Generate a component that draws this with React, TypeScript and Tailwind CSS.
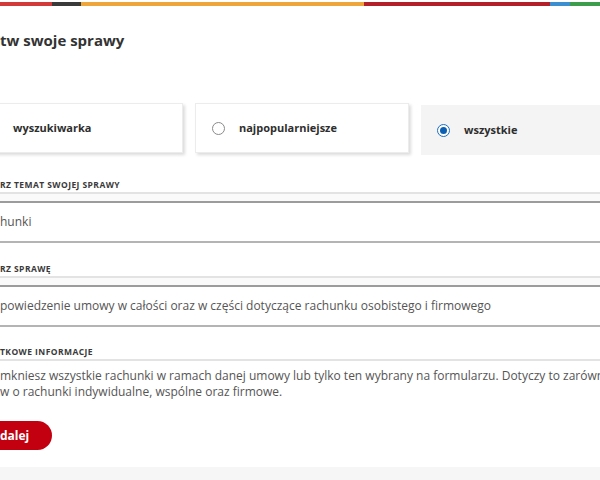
import React from "react";

const stripe = [
  { w: "w-[52px]", c: "bg-[#d23a3a]" },
  { w: "w-[29px]", c: "bg-[#3a3a3a]" },
  { w: "w-[283px]", c: "bg-[#eea53c]" },
  { w: "w-[186px]", c: "bg-[#b3202a]" },
  { w: "w-[20px]", c: "bg-[#3b8fd1]" },
  { w: "flex-1", c: "bg-[#3c9e4c]" },
];

function Radio({ checked }: { checked?: boolean }) {
  if (checked) {
    return (
      <span className="grid h-[13px] w-[13px] shrink-0 place-items-center rounded-full border-[1.5px] border-[#1a6fc0] bg-white">
        <span className="h-[7px] w-[7px] rounded-full bg-[#0b5fb3]" />
      </span>
    );
  }
  return <span className="h-[13px] w-[13px] shrink-0 rounded-full border-[1.5px] border-[#8a8a8a] bg-white" />;
}

function Option({ label, checked, active }: { label: string; checked?: boolean; active?: boolean }) {
  return (
    <div
      className={
        active
          ? "mt-[2px] flex h-[50px] items-center gap-[14px] bg-[#f4f4f4] pl-[16px]"
          : "flex h-[50px] items-center gap-[14px] border border-[#ececec] bg-white pl-[16px] shadow-[2px_2px_3px_rgba(0,0,0,0.14)]"
      }
    >
      <Radio checked={checked} />
      <span className="text-[11px] font-bold text-[#2e2e2e]">{label}</span>
    </div>
  );
}

function FieldLabel({ text, className }: { text: string; className?: string }) {
  return (
    <div className={`border-b-2 border-[#e3e3e3] pb-[2px] ${className ?? ""}`}>
      <p className="text-[8.5px] font-bold uppercase leading-[10px] tracking-[0.05em] text-[#3a3a3a]">{text}</p>
    </div>
  );
}

function FieldValue({ text }: { text: string }) {
  return (
    <>
      <div className="h-[7px] bg-[#fafafa]" />
      <div className="flex h-[42px] items-center border-t-2 border-b-2 border-t-[#9c9c9c] border-b-[#b4b4b4]">
        <span className="whitespace-nowrap text-[12px] text-[#555]">{text}</span>
      </div>
    </>
  );
}

export default function App() {
  return (
    <div className="relative h-[480px] w-[600px] overflow-hidden bg-white font-['Open_Sans',sans-serif]">
      <div className="mt-[2px] flex h-[4px]">
        {stripe.map((s, i) => (
          <div key={i} className={`${s.w} ${s.c}`} />
        ))}
      </div>

      <h1 className="mt-[24px] text-[15px] font-bold leading-[20px] text-[#333]">tw swoje sprawy</h1>

      <div className="ml-[-31px] mt-[53px] grid w-[666px] grid-cols-3 items-start gap-[12px]">
        <Option label="wyszukiwarka" />
        <Option label="najpopularniejsze" />
        <Option label="wszystkie" checked active />
      </div>

      <FieldLabel text="rz temat swojej sprawy" className="mt-[25px]" />
      <FieldValue text="hunki" />

      <FieldLabel text="rz sprawę" className="mt-[21px]" />
      <FieldValue text="powiedzenie umowy w całości oraz w części dotyczące rachunku osobistego i firmowego" />

      <FieldLabel text="tkowe informacje" className="mt-[20px]" />
      <div className="mt-[7px] text-[12px] leading-[16px] text-[#555]">
        <p className="whitespace-nowrap">
          mkniesz wszystkie rachunki w ramach danej umowy lub tylko ten wybrany na formularzu. Dotyczy to zarówno
        </p>
        <p className="whitespace-nowrap">w o rachunki indywidualne, wspólne oraz firmowe.</p>
      </div>

      <button className="mt-[21px] flex h-[29px] w-[52px] items-center rounded-r-full bg-[#c3000f] text-[12px] font-bold text-white">
        dalej
      </button>

      <div className="absolute bottom-0 left-0 h-[13px] w-full bg-[#f6f6f6]" />
    </div>
  );
}
